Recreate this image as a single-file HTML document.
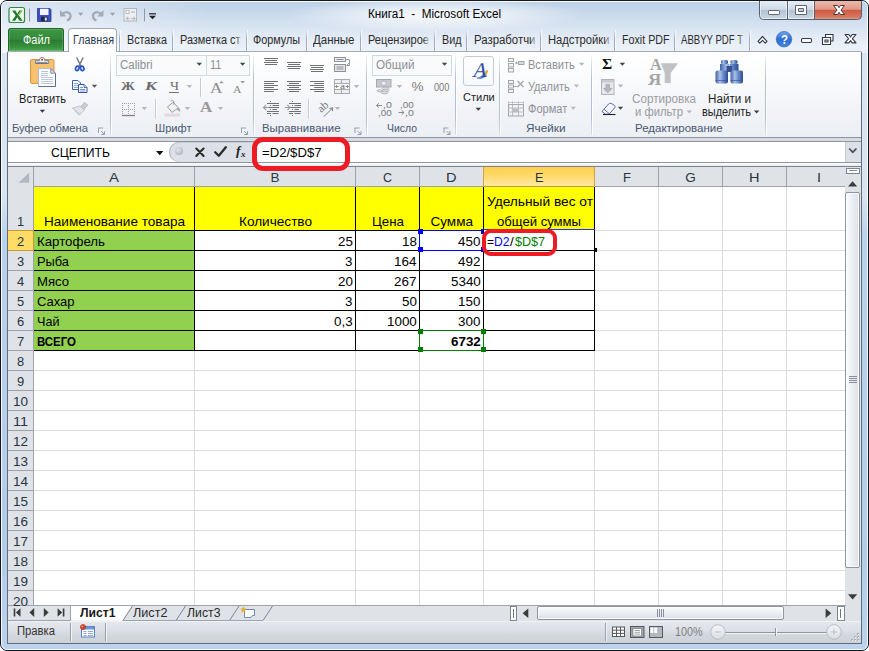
<!DOCTYPE html>
<html lang="ru"><head><meta charset="utf-8"><title>Книга1 - Microsoft Excel</title>
<style>
html,body{margin:0;padding:0;}
body{width:869px;height:651px;overflow:hidden;position:relative;background:#fff;font-family:"Liberation Sans",sans-serif;font-size:12px;color:#1e1e1e;}
#win{position:absolute;left:0;top:0;width:867px;height:649px;border:1px solid #14181f;border-radius:7px;background:linear-gradient(#dbe6f3 0px,#d7e4f2 195px,#b9d2ed 236px,#b2cceb 560px,#bbd3ee 649px);overflow:hidden;}
#win:before{content:"";position:absolute;left:0;top:0;right:0;bottom:0;border:1px solid rgba(255,255,255,.85);border-radius:6px;z-index:2;}
#win:after{content:"";position:absolute;left:1px;top:1px;right:1px;height:51px;background:linear-gradient(100deg,rgba(255,255,255,.4) 0%,rgba(255,255,255,.3) 12%,rgba(255,255,255,0) 24%,rgba(255,255,255,0) 100%),radial-gradient(ellipse 150px 17px at 433px 13px,rgba(255,255,255,.9),rgba(255,255,255,.5) 50%,rgba(255,255,255,0) 100%),linear-gradient(#bed1e8 0%,#c8d9ec 22%,#d9e4f2 50%,#e7eef7 78%,#eef3f9 100%);}
.a{position:absolute;}
.t{position:absolute;white-space:pre;line-height:1;transform-origin:0 0;display:block;}
svg{position:absolute;overflow:visible;}
#filebtn{background:linear-gradient(#3c9743 0%,#34893b 45%,#2b7b32 52%,#36903b 80%,#49ab4b 100%);border:1px solid #216628;border-bottom:none;border-radius:3px 3px 0 0;box-sizing:border-box;box-shadow:inset 0 0 0 1px rgba(255,255,255,.16);}
#acttab{background:#fff;border:1px solid #a0a8b4;border-bottom:none;border-radius:4px 4px 0 0;box-sizing:border-box;z-index:2;}
.tsep{width:1px;background:linear-gradient(rgba(150,165,185,0),rgba(150,165,185,.9) 40%,rgba(150,165,185,.9));box-shadow:1px 0 0 rgba(255,255,255,.7);}
#ribbon{background:linear-gradient(#ffffff 0%,#fbfcfd 25%,#f1f3f7 70%,#eceff4 100%);}
.gsep{width:1px;background:linear-gradient(rgba(175,188,205,.1),#b5c1d2 30%,#b5c1d2 80%,rgba(175,188,205,.3));box-shadow:1px 0 0 rgba(255,255,255,.9);}
#fbar{background:#d8dce2;}
#namebox,#finput{background:#fff;border:1px solid #a5b5cb;box-sizing:border-box;}
#grid{background:#fff;}
#pill{background:#dde1e7;border-radius:10px 0 0 10px;box-shadow:inset 1px 0 0 #aeb4bd, inset 0 1px 0 #c9cdd4;}
.sthumb{box-sizing:border-box;border:1px solid #8e959f;border-radius:2px;box-shadow:inset 0 0 0 1px rgba(255,255,255,.8);}
#status{background:linear-gradient(#e4e7ec 0%,#dcdfe5 40%,#d3d7de 60%,#cdd1d8 100%);border-top:1px solid #f1f2f5;box-sizing:border-box;}
.ssep{width:1px;background:#9aa0a9;box-shadow:1px 0 0 #f1f3f6;}
.zbtn{width:15px;height:15px;border-radius:50%;box-sizing:border-box;border:1px solid #b4b9c1;background:linear-gradient(#f4f5f7,#d5d9df);}
#client{box-sizing:border-box;border:1px solid #626d7c;border-top-color:#a3abb6;border-radius:2px 2px 0 0;pointer-events:none;}
.cbox{box-sizing:border-box;border:1px solid #d0d8e4;background:#f9fafc;}
.isep{width:1px;background:#c5ccd7;box-shadow:1px 0 0 #fff;}
.t{z-index:3;}

</style></head>
<body>
<div id="win"></div>
<div class="a" id="title">
<span class="t" style="left:368.0px;top:7.6px;font-size:12px;transform:scaleX(0.9746);color:#000;">Книга1  -  Microsoft Excel</span>
</div>
<div class="a" id="filebtn" style="left:8px;top:28px;width:56px;height:23px;"></div>
<span class="t" style="left:22.5px;top:33.8px;font-size:12px;transform:scaleX(0.9148);color:#fff;">Файл</span>
<div class="a" id="acttab" style="left:68px;top:28px;width:49px;height:24px;"></div>
<span class="t" style="left:72.5px;top:33.8px;font-size:12px;transform:scaleX(0.8974);color:#2b3a4e;">Главная</span>
<span class="t" style="left:126.5px;top:33.8px;font-size:12px;transform:scaleX(0.8967);color:#2b2b2b;">Вставка</span>
<span class="t" style="left:179.5px;top:33.8px;font-size:12px;transform:scaleX(0.9072);color:#2b2b2b;">Разметка ст</span>
<span class="t" style="left:253.0px;top:33.8px;font-size:12px;transform:scaleX(0.9001);color:#2b2b2b;">Формулы</span>
<span class="t" style="left:313.0px;top:33.8px;font-size:12px;transform:scaleX(0.9571);color:#2b2b2b;">Данные</span>
<span class="t" style="left:367.5px;top:33.8px;font-size:12px;transform:scaleX(0.9184);color:#2b2b2b;">Рецензирое</span>
<span class="t" style="left:441.5px;top:33.8px;font-size:12px;transform:scaleX(0.8978);color:#2b2b2b;">Вид</span>
<span class="t" style="left:473.5px;top:33.8px;font-size:12px;transform:scaleX(0.9500);color:#2b2b2b;">Разработчи</span>
<span class="t" style="left:547.5px;top:33.8px;font-size:12px;transform:scaleX(0.9340);color:#2b2b2b;">Надстройки</span>
<span class="t" style="left:621.5px;top:33.8px;font-size:12px;transform:scaleX(0.8905);color:#2b2b2b;">Foxit PDF</span>
<span class="t" style="left:681.0px;top:33.8px;font-size:12px;transform:scaleX(0.7990);color:#2b2b2b;">ABBYY PDF T</span>
<div class="a" style="left:234.5px;top:33px;width:6px;height:15px;z-index:4;background:linear-gradient(90deg,rgba(226,234,245,0),rgba(226,234,245,.8));"></div>
<div class="a" style="left:423px;top:33px;width:6px;height:15px;z-index:4;background:linear-gradient(90deg,rgba(226,234,245,0),rgba(226,234,245,.8));"></div>
<div class="a" style="left:529.5px;top:33px;width:6px;height:15px;z-index:4;background:linear-gradient(90deg,rgba(226,234,245,0),rgba(226,234,245,.8));"></div>
<div class="a" style="left:603.5px;top:33px;width:6px;height:15px;z-index:4;background:linear-gradient(90deg,rgba(226,234,245,0),rgba(226,234,245,.8));"></div>
<div class="a" style="left:737.5px;top:33px;width:6px;height:15px;z-index:4;background:linear-gradient(90deg,rgba(226,234,245,0),rgba(226,234,245,.8));"></div>
<div class="a tsep" style="left:119px;top:30px;height:21px;"></div>
<div class="a tsep" style="left:172px;top:30px;height:21px;"></div>
<div class="a tsep" style="left:246px;top:30px;height:21px;"></div>
<div class="a tsep" style="left:306px;top:30px;height:21px;"></div>
<div class="a tsep" style="left:360px;top:30px;height:21px;"></div>
<div class="a tsep" style="left:434px;top:30px;height:21px;"></div>
<div class="a tsep" style="left:466px;top:30px;height:21px;"></div>
<div class="a tsep" style="left:540px;top:30px;height:21px;"></div>
<div class="a tsep" style="left:614px;top:30px;height:21px;"></div>
<div class="a tsep" style="left:674px;top:30px;height:21px;"></div>
<div class="a tsep" style="left:749px;top:30px;height:21px;"></div>
<div class="a" id="ribbon" style="left:8px;top:52px;width:853px;height:85px;"></div>
<div class="a" style="left:8px;top:137px;width:853px;height:1px;background:#8e959f;"></div>
<div class="a gsep" style="left:109.5px;top:54px;height:81px;"></div>
<div class="a gsep" style="left:252.5px;top:54px;height:81px;"></div>
<div class="a gsep" style="left:365.5px;top:54px;height:81px;"></div>
<div class="a gsep" style="left:454.5px;top:54px;height:81px;"></div>
<div class="a gsep" style="left:499px;top:54px;height:81px;"></div>
<div class="a gsep" style="left:591px;top:54px;height:81px;"></div>
<div class="a gsep" style="left:765px;top:54px;height:81px;"></div>
<span class="t" style="left:11.5px;top:123.1px;font-size:11.5px;transform:scaleX(0.9724);color:#4a5870;">Буфер обмена</span>
<span class="t" style="left:154.5px;top:123.1px;font-size:11.5px;transform:scaleX(0.9645);color:#4a5870;">Шрифт</span>
<span class="t" style="left:262.0px;top:123.1px;font-size:11.5px;transform:scaleX(0.9915);color:#4a5870;">Выравнивание</span>
<span class="t" style="left:387.0px;top:123.1px;font-size:11.5px;transform:scaleX(0.9069);color:#4a5870;">Число</span>
<span class="t" style="left:526.0px;top:123.1px;font-size:11.5px;transform:scaleX(1.0239);color:#4a5870;">Ячейки</span>
<span class="t" style="left:635.0px;top:123.1px;font-size:11.5px;color:#4a5870;">Редактирование</span>
<div class="a" id="fbar" style="left:8px;top:138px;width:853px;height:29px;"></div>
<div class="a" style="left:8px;top:141px;width:853px;height:1px;background:#8f959d;"></div>
<div class="a" style="left:8px;top:142px;width:853px;height:20px;background:#fff;"></div>
<div class="a" style="left:8px;top:162px;width:853px;height:1px;background:#8f959d;"></div>
<div class="a" style="left:8px;top:163px;width:853px;height:3px;background:linear-gradient(#fff,#e6e9f4);"></div>
<div class="a" style="left:8px;top:166px;width:853px;height:1px;background:#7d838c;"></div>
<div class="a" id="pill" style="left:169px;top:142px;width:86px;height:20px;"></div>
<div class="a" style="left:174.5px;top:147px;width:8px;height:8px;border-radius:50%;background:radial-gradient(circle at 40% 35%,#e6e8ec,#b4b8bf 70%,#a9adb5);"></div>
<svg style="left:156px;top:151px" width="8" height="5"><path d="M0 0H7.4L3.7 4.2Z" fill="#111"/></svg>
<svg style="left:0;top:0;z-index:2" width="869" height="651"><path d="M196.300 148.600C198.500 150.800 201 153.300 203.600 155.900M203.600 148.600C201.300 150.800 198.800 153.300 196.300 155.900" stroke="#2a2a2a" stroke-width="2.100" fill="none" stroke-linecap="round"/><path d="M215.200 152.200L218.800 155.700L225.800 147.200" stroke="#2a2a2a" stroke-width="2.300" fill="none" stroke-linecap="round" stroke-linejoin="round"/></svg>
<span class="t" style="left:236px;top:144px;font-family:'Liberation Serif',serif;font-style:italic;font-weight:bold;font-size:13.5px;color:#222;">f</span>
<span class="t" style="left:241px;top:149.500px;font-family:'Liberation Serif',serif;font-style:italic;font-weight:bold;font-size:9px;color:#222;">x</span>
<span class="t" style="left:50.5px;top:145.6px;font-size:13.5px;transform:scaleX(0.9040);color:#000;">СЦЕПИТЬ</span>
<span class="t" style="left:262.0px;top:145.6px;font-size:13.5px;transform:scaleX(0.9727);color:#000;">=D2/$D$7</span>
<div class="a" style="left:845px;top:142px;width:16px;height:20px;background:#dde1e7;border-left:1px solid #c9cdd4;box-sizing:border-box;"></div>
<svg style="left:848px;top:147px" width="10" height="8"><path d="M1.2 1.5L4.8 5.3L8.4 1.5" stroke="#4a4a4a" stroke-width="1.700" fill="none"/></svg>
<div class="a" id="grid" style="left:8px;top:167px;width:838px;height:439px;"></div>
<div class="a" style="left:0;top:0;width:846px;height:606px;overflow:hidden;"><div class="a" style="left:8px;top:167px;width:838px;height:19px;background:#dfe3e8;border-bottom:1px solid #9da3ab;"></div>
<div class="a" style="left:8px;top:167px;width:25px;height:439px;background:#dfe3e8;border-right:1px solid #9da3ab;"></div>
<div class="a" style="left:483px;top:167px;width:112px;height:20px;box-sizing:border-box;background:linear-gradient(#ffcf48,#ffdb70 50%,#ffe9a2);border:1px solid #d6a045;border-top:none;border-bottom-color:#c4964c;z-index:1;"></div>
<div class="a" style="left:8px;top:230px;width:26px;height:21px;box-sizing:border-box;background:#ffdc66;border:1px solid #cb9434;border-left:none;z-index:1;"></div>
<svg style="left:18px;top:172px" width="12" height="11"><path d="M11.2 0.5V10.8H0.6Z" fill="#b3b8c0"/></svg>
<div class="a" style="left:194px;top:167px;width:1px;height:19px;background:#9da3ab;"></div>
<div class="a" style="left:194px;top:187px;width:1px;height:419px;background:#dbdcdf;"></div>
<div class="a" style="left:355px;top:167px;width:1px;height:19px;background:#9da3ab;"></div>
<div class="a" style="left:355px;top:187px;width:1px;height:419px;background:#dbdcdf;"></div>
<div class="a" style="left:419px;top:167px;width:1px;height:19px;background:#9da3ab;"></div>
<div class="a" style="left:419px;top:187px;width:1px;height:419px;background:#dbdcdf;"></div>
<div class="a" style="left:483px;top:167px;width:1px;height:19px;background:#9da3ab;"></div>
<div class="a" style="left:483px;top:187px;width:1px;height:419px;background:#dbdcdf;"></div>
<div class="a" style="left:594px;top:167px;width:1px;height:19px;background:#9da3ab;"></div>
<div class="a" style="left:594px;top:187px;width:1px;height:419px;background:#dbdcdf;"></div>
<div class="a" style="left:658px;top:167px;width:1px;height:19px;background:#9da3ab;"></div>
<div class="a" style="left:658px;top:187px;width:1px;height:419px;background:#dbdcdf;"></div>
<div class="a" style="left:722px;top:167px;width:1px;height:19px;background:#9da3ab;"></div>
<div class="a" style="left:722px;top:187px;width:1px;height:419px;background:#dbdcdf;"></div>
<div class="a" style="left:786px;top:167px;width:1px;height:19px;background:#9da3ab;"></div>
<div class="a" style="left:786px;top:187px;width:1px;height:419px;background:#dbdcdf;"></div>
<div class="a" style="left:850px;top:167px;width:1px;height:19px;background:#9da3ab;"></div>
<div class="a" style="left:850px;top:187px;width:1px;height:419px;background:#dbdcdf;"></div>
<div class="a" style="left:8px;top:230px;width:25px;height:1px;background:#9da3ab;"></div>
<div class="a" style="left:34px;top:230px;width:812px;height:1px;background:#dbdcdf;"></div>
<div class="a" style="left:8px;top:250px;width:25px;height:1px;background:#9da3ab;"></div>
<div class="a" style="left:34px;top:250px;width:812px;height:1px;background:#dbdcdf;"></div>
<div class="a" style="left:8px;top:270px;width:25px;height:1px;background:#9da3ab;"></div>
<div class="a" style="left:34px;top:270px;width:812px;height:1px;background:#dbdcdf;"></div>
<div class="a" style="left:8px;top:290px;width:25px;height:1px;background:#9da3ab;"></div>
<div class="a" style="left:34px;top:290px;width:812px;height:1px;background:#dbdcdf;"></div>
<div class="a" style="left:8px;top:310px;width:25px;height:1px;background:#9da3ab;"></div>
<div class="a" style="left:34px;top:310px;width:812px;height:1px;background:#dbdcdf;"></div>
<div class="a" style="left:8px;top:330px;width:25px;height:1px;background:#9da3ab;"></div>
<div class="a" style="left:34px;top:330px;width:812px;height:1px;background:#dbdcdf;"></div>
<div class="a" style="left:8px;top:350px;width:25px;height:1px;background:#9da3ab;"></div>
<div class="a" style="left:34px;top:350px;width:812px;height:1px;background:#dbdcdf;"></div>
<div class="a" style="left:8px;top:370px;width:25px;height:1px;background:#9da3ab;"></div>
<div class="a" style="left:34px;top:370px;width:812px;height:1px;background:#dbdcdf;"></div>
<div class="a" style="left:8px;top:390px;width:25px;height:1px;background:#9da3ab;"></div>
<div class="a" style="left:34px;top:390px;width:812px;height:1px;background:#dbdcdf;"></div>
<div class="a" style="left:8px;top:410px;width:25px;height:1px;background:#9da3ab;"></div>
<div class="a" style="left:34px;top:410px;width:812px;height:1px;background:#dbdcdf;"></div>
<div class="a" style="left:8px;top:430px;width:25px;height:1px;background:#9da3ab;"></div>
<div class="a" style="left:34px;top:430px;width:812px;height:1px;background:#dbdcdf;"></div>
<div class="a" style="left:8px;top:450px;width:25px;height:1px;background:#9da3ab;"></div>
<div class="a" style="left:34px;top:450px;width:812px;height:1px;background:#dbdcdf;"></div>
<div class="a" style="left:8px;top:470px;width:25px;height:1px;background:#9da3ab;"></div>
<div class="a" style="left:34px;top:470px;width:812px;height:1px;background:#dbdcdf;"></div>
<div class="a" style="left:8px;top:490px;width:25px;height:1px;background:#9da3ab;"></div>
<div class="a" style="left:34px;top:490px;width:812px;height:1px;background:#dbdcdf;"></div>
<div class="a" style="left:8px;top:510px;width:25px;height:1px;background:#9da3ab;"></div>
<div class="a" style="left:34px;top:510px;width:812px;height:1px;background:#dbdcdf;"></div>
<div class="a" style="left:8px;top:530px;width:25px;height:1px;background:#9da3ab;"></div>
<div class="a" style="left:34px;top:530px;width:812px;height:1px;background:#dbdcdf;"></div>
<div class="a" style="left:8px;top:550px;width:25px;height:1px;background:#9da3ab;"></div>
<div class="a" style="left:34px;top:550px;width:812px;height:1px;background:#dbdcdf;"></div>
<div class="a" style="left:8px;top:570px;width:25px;height:1px;background:#9da3ab;"></div>
<div class="a" style="left:34px;top:570px;width:812px;height:1px;background:#dbdcdf;"></div>
<div class="a" style="left:8px;top:590px;width:25px;height:1px;background:#9da3ab;"></div>
<div class="a" style="left:34px;top:590px;width:812px;height:1px;background:#dbdcdf;"></div>
<div class="a" style="left:8px;top:610px;width:25px;height:1px;background:#9da3ab;"></div>
<div class="a" style="left:34px;top:610px;width:812px;height:1px;background:#dbdcdf;"></div>
<div class="a" style="left:34px;top:187px;width:560px;height:43px;background:#ffff00;"></div>
<div class="a" style="left:34px;top:231px;width:160px;height:119px;background:#92d050;"></div>
<div class="a" style="left:195px;top:231px;width:399px;height:119px;background:#fff;"></div>
<div class="a" style="left:194px;top:187px;width:1px;height:164px;background:#000;"></div>
<div class="a" style="left:355px;top:187px;width:1px;height:164px;background:#000;"></div>
<div class="a" style="left:419px;top:187px;width:1px;height:164px;background:#000;"></div>
<div class="a" style="left:483px;top:187px;width:1px;height:164px;background:#000;"></div>
<div class="a" style="left:594px;top:187px;width:1px;height:164px;background:#000;"></div>
<div class="a" style="left:34px;top:230px;width:561px;height:1px;background:#000;"></div>
<div class="a" style="left:34px;top:250px;width:561px;height:1px;background:#000;"></div>
<div class="a" style="left:34px;top:270px;width:561px;height:1px;background:#000;"></div>
<div class="a" style="left:34px;top:290px;width:561px;height:1px;background:#000;"></div>
<div class="a" style="left:34px;top:310px;width:561px;height:1px;background:#000;"></div>
<div class="a" style="left:34px;top:330px;width:561px;height:1px;background:#000;"></div>
<div class="a" style="left:34px;top:350px;width:561px;height:1px;background:#000;"></div></div>
<span class="t" style="left:109.0px;top:170.9px;font-size:13.5px;transform:scaleX(1.1092);color:#27343f;">A</span>
<span class="t" style="left:270.5px;top:170.9px;font-size:13.5px;color:#27343f;">B</span>
<span class="t" style="left:383.0px;top:170.9px;font-size:13.5px;transform:scaleX(0.9231);color:#27343f;">C</span>
<span class="t" style="left:446.2px;top:170.9px;font-size:13.5px;transform:scaleX(1.0769);color:#27343f;">D</span>
<span class="t" style="left:534.8px;top:170.9px;font-size:13.5px;transform:scaleX(0.9428);color:#27343f;">E</span>
<span class="t" style="left:622.5px;top:170.9px;font-size:13.5px;transform:scaleX(0.9697);color:#27343f;">F</span>
<span class="t" style="left:685.2px;top:170.9px;font-size:13.5px;color:#27343f;">G</span>
<span class="t" style="left:749.2px;top:170.9px;font-size:13.5px;transform:scaleX(1.0769);color:#27343f;">H</span>
<span class="t" style="left:816.5px;top:170.9px;font-size:13.5px;transform:scaleX(1.0622);color:#27343f;">I</span>
<span class="t" style="left:16.9px;top:214.6px;font-size:13.5px;transform:scaleX(0.9580);color:#27343f;">1</span>
<span class="t" style="left:16.9px;top:234.6px;font-size:13.5px;transform:scaleX(0.9580);color:#27343f;">2</span>
<span class="t" style="left:16.9px;top:254.6px;font-size:13.5px;transform:scaleX(0.9580);color:#27343f;">3</span>
<span class="t" style="left:16.9px;top:274.6px;font-size:13.5px;transform:scaleX(0.9580);color:#27343f;">4</span>
<span class="t" style="left:16.9px;top:294.6px;font-size:13.5px;transform:scaleX(0.9580);color:#27343f;">5</span>
<span class="t" style="left:16.9px;top:314.6px;font-size:13.5px;transform:scaleX(0.9580);color:#27343f;">6</span>
<span class="t" style="left:16.9px;top:334.6px;font-size:13.5px;transform:scaleX(0.9580);color:#27343f;">7</span>
<span class="t" style="left:16.9px;top:354.6px;font-size:13.5px;transform:scaleX(0.9580);color:#27343f;">8</span>
<span class="t" style="left:16.9px;top:374.6px;font-size:13.5px;transform:scaleX(0.9580);color:#27343f;">9</span>
<span class="t" style="left:13.0px;top:394.6px;font-size:13.5px;color:#27343f;">10</span>
<span class="t" style="left:13.0px;top:414.6px;font-size:13.5px;transform:scaleX(1.0702);color:#27343f;">11</span>
<span class="t" style="left:13.0px;top:434.6px;font-size:13.5px;color:#27343f;">12</span>
<span class="t" style="left:13.0px;top:454.6px;font-size:13.5px;color:#27343f;">13</span>
<span class="t" style="left:13.0px;top:474.6px;font-size:13.5px;color:#27343f;">14</span>
<span class="t" style="left:13.0px;top:494.6px;font-size:13.5px;color:#27343f;">15</span>
<span class="t" style="left:13.0px;top:514.6px;font-size:13.5px;color:#27343f;">16</span>
<span class="t" style="left:13.0px;top:534.6px;font-size:13.5px;color:#27343f;">17</span>
<span class="t" style="left:13.0px;top:554.6px;font-size:13.5px;color:#27343f;">18</span>
<span class="t" style="left:13.0px;top:574.6px;font-size:13.5px;color:#27343f;">19</span>
<div class="a" style="left:8px;top:591px;width:25px;height:15px;overflow:hidden;"><span class="t" style="left:5.0px;top:3.6px;font-size:13.5px;color:#27343f;">20</span></div>
<span class="t" style="left:43.5px;top:214.6px;font-size:13.5px;transform:scaleX(1.0041);color:#000;">Наименование товара</span>
<span class="t" style="left:238.5px;top:214.6px;font-size:13.5px;transform:scaleX(1.0069);color:#000;">Количество</span>
<span class="t" style="left:372.0px;top:214.6px;font-size:13.5px;transform:scaleX(0.9856);color:#000;">Цена</span>
<span class="t" style="left:430.5px;top:214.6px;font-size:13.5px;color:#000;">Сумма</span>
<span class="t" style="left:486.5px;top:194.6px;font-size:13.5px;transform:scaleX(1.0168);color:#000;">Удельный вес от</span>
<span class="t" style="left:497.0px;top:214.6px;font-size:13.5px;transform:scaleX(0.9697);color:#000;">общей суммы</span>
<span class="t" style="left:36.5px;top:234.6px;font-size:13.5px;transform:scaleX(0.9826);color:#000;">Картофель</span>
<span class="t" style="left:36.5px;top:254.6px;font-size:13.5px;transform:scaleX(0.9512);color:#000;">Рыба</span>
<span class="t" style="left:36.5px;top:274.6px;font-size:13.5px;transform:scaleX(0.9706);color:#000;">Мясо</span>
<span class="t" style="left:36.5px;top:294.6px;font-size:13.5px;transform:scaleX(0.9608);color:#000;">Сахар</span>
<span class="t" style="left:36.5px;top:314.6px;font-size:13.5px;transform:scaleX(0.9357);color:#000;">Чай</span>
<span class="t" style="left:36.5px;top:334.6px;font-size:13.5px;transform:scaleX(0.8484);color:#000;font-weight:bold;">ВСЕГО</span>
<span class="t" style="left:337.6px;top:234.6px;font-size:13.5px;transform:scaleX(0.9913);color:#000;">25</span>
<span class="t" style="left:345.1px;top:254.6px;font-size:13.5px;transform:scaleX(0.9913);color:#000;">3</span>
<span class="t" style="left:337.6px;top:274.6px;font-size:13.5px;transform:scaleX(0.9913);color:#000;">20</span>
<span class="t" style="left:345.1px;top:294.6px;font-size:13.5px;transform:scaleX(0.9913);color:#000;">3</span>
<span class="t" style="left:333.9px;top:314.6px;font-size:13.5px;transform:scaleX(0.9903);color:#000;">0,3</span>
<span class="t" style="left:401.6px;top:234.6px;font-size:13.5px;transform:scaleX(0.9913);color:#000;">18</span>
<span class="t" style="left:394.1px;top:254.6px;font-size:13.5px;transform:scaleX(0.9920);color:#000;">164</span>
<span class="t" style="left:394.1px;top:274.6px;font-size:13.5px;transform:scaleX(0.9920);color:#000;">267</span>
<span class="t" style="left:401.6px;top:294.6px;font-size:13.5px;transform:scaleX(0.9913);color:#000;">50</span>
<span class="t" style="left:386.7px;top:314.6px;font-size:13.5px;transform:scaleX(0.9918);color:#000;">1000</span>
<span class="t" style="left:458.1px;top:234.6px;font-size:13.5px;transform:scaleX(0.9920);color:#000;">450</span>
<span class="t" style="left:458.1px;top:254.6px;font-size:13.5px;transform:scaleX(0.9920);color:#000;">492</span>
<span class="t" style="left:450.7px;top:274.6px;font-size:13.5px;transform:scaleX(0.9918);color:#000;">5340</span>
<span class="t" style="left:458.1px;top:294.6px;font-size:13.5px;transform:scaleX(0.9920);color:#000;">150</span>
<span class="t" style="left:458.1px;top:314.6px;font-size:13.5px;transform:scaleX(0.9920);color:#000;">300</span>
<span class="t" style="left:451.0px;top:334.6px;font-size:13.5px;transform:scaleX(0.9918);color:#000;font-weight:bold;">6732</span>
<div class="a" style="left:845px;top:167px;width:16px;height:438px;background:#dfe3e8;"></div>
<div class="a" style="left:846px;top:168px;width:14px;height:6px;box-sizing:border-box;border:1px solid #7f858e;background:#fff;"></div>
<div class="a" style="left:849px;top:170px;width:8px;height:1px;background:#8a9099;"></div>
<svg style="left:848px;top:181px" width="10" height="6"><path d="M0 5.4L4.6 0.3L9.2 5.4Z" fill="#3c3c3c"/></svg>
<div class="a sthumb" style="left:845px;top:192px;width:15px;height:376px;background:linear-gradient(90deg,#fbfcfd,#eef1f5 40%,#dde1e7);"></div>
<div class="a" style="left:849px;top:376px;width:8px;height:1px;background:#8a9099;"></div>
<div class="a" style="left:849px;top:378px;width:8px;height:1px;background:#8a9099;"></div>
<div class="a" style="left:849px;top:380px;width:8px;height:1px;background:#8a9099;"></div>
<div class="a" style="left:849px;top:382px;width:8px;height:1px;background:#8a9099;"></div>
<svg style="left:848px;top:594px" width="10" height="6"><path d="M0 0.3H9.2L4.6 5.4Z" fill="#3c3c3c"/></svg>
<div class="a" style="left:8px;top:605px;width:853px;height:16px;background:#dfe3e8;"></div>
<div class="a" style="left:8px;top:605px;width:838px;height:1px;background:#9da3ab;"></div>
<div class="a" style="left:8px;top:620px;width:63px;height:1px;background:#9da3ab;"></div>
<svg style="left:0;top:0" width="869" height="651"><path d="M13.7 608.5v8h1.6v-8zM15.9 612.5l4.6-4.2v8.4z" fill="#3b3b3b"/><path d="M29.4 612.5l4.8-4.4v8.8z" fill="#3b3b3b"/><path d="M48.6 612.5l-4.8-4.4v8.8z" fill="#3b3b3b"/><path d="M64.4 608.5v8h-1.6v-8zM62.2 612.5l-4.6-4.2v8.4z" fill="#3b3b3b"/><path d="M70.5 606H131.5L122.5 620.5H70.5Z" fill="#fff"/><path d="M70.5 606V620.5" stroke="#9da3ab" fill="none"/><path d="M132.5 606L123 620.5M185.5 606L176 620.5M239 606L229.5 620.5M272.5 606L263 620.5" stroke="#7f858e" stroke-width="1" fill="none"/><path d="M123 620.5H263" stroke="#9da3ab" fill="none"/></svg>
<span class="t" style="left:80.0px;top:606.8px;font-size:12.5px;transform:scaleX(0.9730);color:#1a1a1a;font-weight:bold;">Лист1</span>
<span class="t" style="left:133.0px;top:606.8px;font-size:12.5px;transform:scaleX(1.0110);color:#2a2a2a;">Лист2</span>
<span class="t" style="left:187.0px;top:606.8px;font-size:12.5px;transform:scaleX(0.9817);color:#2a2a2a;">Лист3</span>
<div class="a" style="left:510px;top:606px;width:7px;height:15px;box-sizing:border-box;border:1px solid #7f858e;background:#fff;"></div>
<div class="a" style="left:513px;top:609px;width:1px;height:9px;background:#6f757e;"></div>
<svg style="left:522px;top:608px" width="7" height="11"><path d="M6.3 0.5V10.1L0.6 5.3Z" fill="#3c3c3c"/></svg>
<div class="a sthumb" style="left:537px;top:606px;width:247px;height:14px;background:linear-gradient(#fbfcfd,#eef1f5 40%,#dde1e7);"></div>
<div class="a" style="left:657px;top:609px;width:1px;height:8px;background:#8a9099;"></div>
<div class="a" style="left:659px;top:609px;width:1px;height:8px;background:#8a9099;"></div>
<div class="a" style="left:661px;top:609px;width:1px;height:8px;background:#8a9099;"></div>
<div class="a" style="left:663px;top:609px;width:1px;height:8px;background:#8a9099;"></div>
<svg style="left:825px;top:608px" width="7" height="11"><path d="M0.6 0.5V10.1L6.3 5.3Z" fill="#3c3c3c"/></svg>
<div class="a" style="left:837px;top:606px;width:8px;height:15px;box-sizing:border-box;border:1px solid #7f858e;background:#fff;"></div>
<div class="a" style="left:840px;top:609px;width:1px;height:9px;background:#6f757e;"></div>
<div class="a" id="status" style="left:8px;top:621px;width:853px;height:22px;"></div>
<span class="t" style="left:16.5px;top:625.2px;font-size:12px;transform:scaleX(0.9372);color:#333;">Правка</span>
<div class="a ssep" style="left:70px;top:623px;height:18px;"></div>
<div class="a ssep" style="left:105px;top:623px;height:18px;"></div>
<div class="a ssep" style="left:605px;top:623px;height:18px;"></div>
<span class="t" style="left:674.5px;top:625.6px;font-size:12px;transform:scaleX(0.8957);color:#7a7d82;">100%</span>
<div class="a" style="left:725px;top:631.5px;width:102px;height:1px;background:#8e949c;box-shadow:0 1px 0 #f4f5f7;"></div>
<div class="a" style="left:775px;top:628px;width:1px;height:8px;background:#8e949c;box-shadow:1px 0 0 #f4f5f7;"></div>
<svg style="left:0;top:0;z-index:2" width="869" height="651"><defs><linearGradient id="zg" x1="0" y1="0" x2="0" y2="1"><stop offset="0" stop-color="#f3f4f6"/><stop offset="1" stop-color="#d9dce2"/></linearGradient></defs><circle cx="718" cy="632" r="7.300" fill="url(#zg)" stroke="#b3b8c0" stroke-width=".9"/><rect x="714.2" y="631" width="7.600" height="2" fill="#c3c7cd" stroke="#f7f8f9" stroke-width=".6"/><circle cx="834" cy="632" r="7.300" fill="url(#zg)" stroke="#b3b8c0" stroke-width=".9"/><path d="M830.2 631h2.800v-2.800h2v2.800h2.800v2h-2.800v2.800h-2v-2.800h-2.800z" fill="#c3c7cd" stroke="#f7f8f9" stroke-width=".6"/></svg>
<div class="a" id="client" style="left:7px;top:51px;width:855px;height:593px;"></div>
<div class="a" style="left:419px;top:230px;width:65px;height:21px;box-sizing:border-box;border:1px solid #0000ff;"></div>
<div class="a" style="left:418px;top:229px;width:5px;height:5px;background:#0000ff;"></div>
<div class="a" style="left:418px;top:247px;width:5px;height:5px;background:#0000ff;"></div>
<div class="a" style="left:481px;top:229px;width:5px;height:5px;background:#0000ff;"></div>
<div class="a" style="left:481px;top:247px;width:5px;height:5px;background:#0000ff;"></div>
<div class="a" style="left:419px;top:330px;width:65px;height:21px;box-sizing:border-box;border:1px solid #008000;"></div>
<div class="a" style="left:418px;top:329px;width:5px;height:5px;background:#007a00;"></div>
<div class="a" style="left:418px;top:347px;width:5px;height:5px;background:#007a00;"></div>
<div class="a" style="left:481px;top:329px;width:5px;height:5px;background:#007a00;"></div>
<div class="a" style="left:481px;top:347px;width:5px;height:5px;background:#007a00;"></div>
<div class="a" style="left:484px;top:229px;width:111px;height:1px;background:#2a2aff;z-index:4;"></div>
<div class="a" style="left:483px;top:230px;width:112px;height:20.5px;border:1px solid #000;box-sizing:border-box;background:#fff;border-top:none;"></div>
<div class="a" style="left:593.5px;top:248px;width:3.5px;height:4px;background:#000;"></div>
<span class="t" style="left:486.5px;top:234.6px;font-size:13.5px;transform:scaleX(0.8871);color:#000;">=</span>
<span class="t" style="left:493.5px;top:234.6px;font-size:13.5px;transform:scaleX(0.8977);color:#0000ff;">D2</span>
<span class="t" style="left:510.0px;top:234.6px;font-size:13.5px;color:#000;">/</span>
<span class="t" style="left:515.0px;top:234.6px;font-size:13.5px;transform:scaleX(0.9293);color:#008000;">$D$7</span>
<div class="a" style="left:252px;top:137.300px;width:98.200px;height:34.200px;box-sizing:border-box;border:5px solid #ed1c24;border-radius:11px;z-index:5;"></div>
<div class="a" style="left:482px;top:228.700px;width:75.300px;height:27.500px;box-sizing:border-box;border:4.600px solid #ed1c24;border-radius:9px;z-index:5;"></div>
<div class="a cbox" style="left:116px;top:55px;width:91px;height:21px;"></div>
<div class="a cbox" style="left:206px;top:55px;width:44px;height:21px;"></div>
<span class="t" style="left:119.5px;top:59.4px;font-size:12px;transform:scaleX(0.9554);color:#8b8f96;">Calibri</span>
<span class="t" style="left:209.5px;top:59.4px;font-size:12px;transform:scaleX(0.9223);color:#8b8f96;">11</span>
<span class="t" style="left:121.0px;top:79.2px;font-size:13.5px;transform:scaleX(1.0330);font-family:'Liberation Serif',serif;font-weight:bold;color:#6b6b6b;">Ж</span>
<span class="t" style="left:145.0px;top:79.2px;font-size:13.5px;transform:scaleX(1.3106);font-family:'Liberation Serif',serif;font-weight:bold;font-style:italic;color:#6b6b6b;">К</span>
<span class="t" style="left:169.5px;top:79.2px;font-size:13.5px;transform:scaleX(1.0249);font-family:'Liberation Serif',serif;color:#6b6b6b;">Ч</span>
<div class="a" style="left:169px;top:92px;width:10px;height:1px;background:#777;"></div>
<div class="a isep" style="left:200px;top:78px;height:19px;"></div>
<span class="t" style="left:209.5px;top:79.7px;font-size:15.5px;transform:scaleX(1.1158);font-family:'Liberation Serif',serif;color:#8c8c8c;">A</span>
<span class="t" style="left:232.5px;top:83.5px;font-size:11px;transform:scaleX(1.0688);font-family:'Liberation Serif',serif;color:#8c8c8c;">A</span>
<div class="a isep" style="left:155px;top:99px;height:20px;"></div>
<span class="t" style="left:199.5px;top:98.7px;font-size:15.5px;transform:scaleX(1.0979);font-family:'Liberation Serif',serif;font-weight:bold;color:#9a9a9a;">A</span>
<span class="t" style="left:339.5px;top:81.7px;font-size:9px;transform:scaleX(1.2500);font-family:'Liberation Serif',serif;color:#6e6e6e;">a</span>
<div class="a isep" style="left:308px;top:99px;height:20px;"></div>
<div class="a cbox" style="left:372px;top:55px;width:80px;height:21px;"></div>
<span class="t" style="left:375.5px;top:59.4px;font-size:12px;transform:scaleX(0.9747);color:#8b8f96;">Общий</span>
<span class="t" style="left:411.5px;top:80.1px;font-size:13.5px;color:#7a7a7a;">%</span>
<span class="t" style="left:433.5px;top:81.8px;font-size:11.5px;transform:scaleX(0.7974);color:#7a7a7a;">000</span>
<span class="t" style="left:383.0px;top:101.4px;font-size:9px;transform:scaleX(1.1709);color:#7a7a7a;">,0</span>
<span class="t" style="left:378.0px;top:108.6px;font-size:9px;transform:scaleX(1.1026);color:#7a7a7a;">,00</span>
<span class="t" style="left:400.0px;top:101.4px;font-size:9px;transform:scaleX(1.1026);color:#7a7a7a;">,00</span>
<span class="t" style="left:405.0px;top:108.6px;font-size:9px;transform:scaleX(1.1709);color:#7a7a7a;">,0</span>
<div class="a" style="left:463px;top:55.500px;width:31px;height:30px;box-sizing:border-box;border:1px solid #c3cbd7;border-radius:3px;background:linear-gradient(#fff,#f6f8fb);"></div>
<span class="t" style="left:470.500px;top:59.800px;font-size:21px;font-family:'Liberation Serif',serif;color:#2b4aa0;transform:skewX(-12deg);transform-origin:0 100%;">A</span>
<span class="t" style="left:462.5px;top:91.8px;font-size:11.5px;transform:scaleX(0.9595);color:#1e1e1e;">Стили</span>
<span class="t" style="left:527.5px;top:59.1px;font-size:12px;transform:scaleX(0.9199);color:#8f9196;">Вставить</span>
<span class="t" style="left:527.5px;top:81.1px;font-size:12px;transform:scaleX(0.9099);color:#8f9196;">Удалить</span>
<span class="t" style="left:527.5px;top:103.0px;font-size:12px;transform:scaleX(0.9193);color:#8f9196;">Формат</span>
<span class="t" style="left:602.3px;top:56.5px;font-size:14.5px;transform:scaleX(1.0755);font-family:'Liberation Serif',serif;font-weight:bold;color:#111;">Σ</span>
<span class="t" style="left:649.5px;top:57.1px;font-size:16px;transform:scaleX(1.0205);font-family:'Liberation Serif',serif;font-weight:bold;color:#a6a6a6;">A</span>
<span class="t" style="left:648.0px;top:71.6px;font-size:16px;transform:scaleX(1.1503);font-family:'Liberation Serif',serif;font-weight:bold;color:#a6a6a6;">Я</span>
<span class="t" style="left:631.5px;top:93.1px;font-size:12px;transform:scaleX(0.9718);color:#9a9ca1;">Сортировка</span>
<span class="t" style="left:635.0px;top:105.6px;font-size:12px;transform:scaleX(0.9392);color:#9a9ca1;">и фильтр</span>
<span class="t" style="left:708.0px;top:93.1px;font-size:12px;transform:scaleX(0.9711);color:#1e1e1e;">Найти и</span>
<span class="t" style="left:701.5px;top:105.6px;font-size:12px;transform:scaleX(0.9119);color:#1e1e1e;">выделить</span>
<svg style="left:0;top:0;z-index:2" width="869" height="651"><g>
<rect x="30.500" y="59.500" width="23.500" height="24" rx="1.500" fill="#f4bb62" stroke="#d9964a"/>
<rect x="31.500" y="60.500" width="21.500" height="22" fill="#f6c473" opacity=".8"/>
<path d="M35.500 63.500v-2.800h3.900c0-1.900 1.100-3.400 2.700-3.400s2.700 1.500 2.700 3.400h3.900v2.800z" fill="#eef0f4" stroke="#6f7886" stroke-width=".9"/>
<path d="M36.500 62.800h11" stroke="#4e5663" stroke-width=".9"/>
<circle cx="42.100" cy="59.800" r=".95" fill="#9a3a22"/>
<path d="M38.500 68.500h12.300l4.700 4.700v13.300h-17z" fill="#fdfdfe" stroke="#a9bbd6"/>
<path d="M55.500 73.200v13.300h-17" fill="none" stroke="#5f6f8c"/>
<path d="M50.800 68.500v4.700h4.700z" fill="#dde5f1" stroke="#6f809e" stroke-width=".9"/>
<path d="M41 71.500h7M41 73.500h7M41 75.500h7M41 77.500h12M41 79.500h12M41 81.500h12M41 83.500h12" stroke="#b3c1d7" stroke-width=".9"/>
</g>
<path d="M39.7 109.7h5.4l-2.7 3z" fill="#3c3c3c"/>
<g fill="none">
<path d="M76.900 58l4 8.200M82.900 58l-4 8.200" stroke="#777d86" stroke-width="1.500" stroke-linecap="round"/>
<ellipse cx="77.300" cy="68.400" rx="1.700" ry="2.300" stroke="#2450c0" stroke-width="1.600" fill="#dfe8fa" transform="rotate(20 77.300 68.400)"/>
<ellipse cx="82.200" cy="68.400" rx="1.700" ry="2.300" stroke="#2450c0" stroke-width="1.600" fill="#dfe8fa" transform="rotate(-20 82.200 68.400)"/>
</g>
<g>
<path d="M72.500 80.500h5.500l2.500 2.500v6.500h-8z" fill="#fff" stroke="#3a62b3"/>
<path d="M74 83.5h4M74 85.5h5M74 87.500h5" stroke="#7f9bd0" stroke-width=".9"/>
<path d="M78.500 84.500h5.500l3 3v5h-8.500z" fill="#fff" stroke="#2f55a6"/>
<path d="M84 84.500v3h3" fill="#cfdcf3" stroke="#2f55a6" stroke-width=".8"/>
<path d="M80 87.500h3M80 89.500h5.500M80 91h5.500" stroke="#6f8fce" stroke-width=".9"/>
</g>
<path d="M91.8 84.8h5.4l-2.7 3z" fill="#555"/>
<g>
<path d="M84.500 102.300l3.300 2.700-4.300 5-3.300-2.700z" fill="#c9ccd1" stroke="#aeb2b8" stroke-width=".7"/>
<path d="M72.300 108.300l7.600-2.300 4.600 3.800-5.200 5.400c-2.400-2.900-4.600-5-7-6.900z" fill="#e3e5e8" stroke="#b3b7bd" stroke-width=".8"/>
<path d="M74.500 109.500c2 1.500 3.600 3.100 5 4.700" stroke="#c5c8cd" fill="none"/>
</g>
<path d="M196.6 62.8h5.4l-2.7 3z" fill="#444"/>
<path d="M239.9 62.8h5.4l-2.7 3z" fill="#444"/>
<path d="M186.7 85h5.4l-2.7 3z" fill="#b3b6bb"/>
<path d="M219.2 83.300h4.600l-2.300-2.600z" fill="#9a9a9a"/>
<path d="M240.300 81h4.600l-2.300 2.600z" fill="#9a9a9a"/>
<g stroke="#9a9ea5" stroke-width="1" stroke-dasharray="1 1" fill="none">
<path d="M122.500 103v12M128.500 103v12M134.500 103v12M122 103.500h13M122 109.500h13"/></g>
<path d="M122 115.500h13" stroke="#7e7e7e" stroke-width="1.200"/>
<path d="M141.6 107h5.4l-2.7 3z" fill="#b3b6bb"/>
<g>
<path d="M167.500 106.800l5.800-4.600 5 5.600-6.300 4.600z" fill="#f3f3f4" stroke="#8f9298" stroke-width=".9"/>
<path d="M171 101.500c.5-1.500 2.600-1.500 2.800.3l.2 3" fill="none" stroke="#8f9298" stroke-width=".9"/>
<path d="M178.300 107.500c1.500.5 2.200 2 1.900 4.400-.9-.9-2-1.500-3.400-2z" fill="#a7aab0"/>
<rect x="164.500" y="113.500" width="15.500" height="3.200" fill="#e3dadf"/>
</g>
<path d="M184.7 107h5.4l-2.7 3z" fill="#b3b6bb"/>
<path d="M217.8 107h5.4l-2.7 3z" fill="#b3b6bb"/>
<path d="M264 58.5h14M264.98 60.5h12.04M264 62.5h14M264.98 64.5h12.04" stroke="#707070" stroke-width="1" fill="none"/>
<path d="M287 62.5h14M287.98 64.5h12.04M287 66.5h14M287.98 68.5h12.04" stroke="#707070" stroke-width="1" fill="none"/>
<path d="M310 65.5h14M310.98 67.5h12.04M310 69.5h14M310.98 71.5h12.04" stroke="#707070" stroke-width="1" fill="none"/>
<path d="M264 81.5h14M264 83.5h9.8M264 85.5h14M264 87.5h9.8M264 89.5h14M264 91.5h9.8" stroke="#707070" stroke-width="1" fill="none"/>
<path d="M287 81.5h14M288.96 83.5h10.08M287 85.5h14M288.96 87.5h10.08M287 89.5h14M288.96 91.5h10.08" stroke="#707070" stroke-width="1" fill="none"/>
<path d="M310 81.5h14M314.2 83.5h9.8M310 85.5h14M314.2 87.5h9.8M310 89.5h14M314.2 91.5h9.8" stroke="#707070" stroke-width="1" fill="none"/>
<g>
<rect x="334.500" y="57.500" width="11" height="4" fill="#eceef1" stroke="#8d9096"/>
<path d="M336.500 59.500h7" stroke="#8d9096"/>
<path d="M345.500 59.500h4v6l-2.500 0" fill="none" stroke="#8d9096" stroke-width=".9"/>
<path d="M349 63l-2.300 2.500 2.500.3" fill="none" stroke="#8d9096" stroke-width=".9"/>
<rect x="334.500" y="64.500" width="11" height="7" fill="#e3e5e9" stroke="#8d9096"/>
<path d="M336.500 67h7M336.500 69h7" stroke="#8d9096"/>
</g>
<g>
<rect x="334.500" y="79.500" width="15" height="14" fill="#eceef1" stroke="#a7aab0"/>
<path d="M334.500 83.500h15M334.500 89.500h15M341.500 79.500v4M341.500 89.500v4" stroke="#a7aab0"/>
<rect x="335" y="84" width="14" height="5" fill="#f8f8f9"/>
<path d="M335.500 86.500h3M345.500 86.500h3" stroke="#7d7d7d" stroke-width=".9"/>
<path d="M337 85l-1.500 1.500 1.500 1.500M347 85l1.500 1.500-1.500 1.500" stroke="#7d7d7d" stroke-width=".8" fill="none"/>
</g>
<path d="M353.8 85h5.4l-2.7 3z" fill="#b3b6bb"/>
<path d="M270.5 101v15" stroke="#707070" stroke-dasharray="1 1"/><path d="M267 103.5h12M267 107.5h12M267 111.5h12" stroke="#707070" stroke-width="1" fill="none"/><path d="M272.5 105.5h6.500M272.5 109.500h4.500" stroke="#707070"/><path d="M267 113.500h3M272.5 113.500h6" stroke="#707070"/><path d="M263.5 107.500h5M266.1 105l-2.600 2.500 2.600 2.500" stroke="#9a9da3" fill="none" stroke-width="1.100"/>
<path d="M292.5 101v15" stroke="#707070" stroke-dasharray="1 1"/><path d="M289 103.5h12M289 107.5h12M289 111.5h12" stroke="#707070" stroke-width="1" fill="none"/><path d="M294.5 105.5h6.500M294.5 109.500h4.500" stroke="#707070"/><path d="M289 113.500h3M294.5 113.500h6" stroke="#707070"/><path d="M285 107.500h5M287.4 105l2.600 2.500-2.600 2.500" stroke="#9a9da3" fill="none" stroke-width="1.100"/>
<text x="0" y="3.300" transform="translate(323 107) rotate(-42)" text-anchor="middle" font-family="Liberation Serif, serif" font-size="11.500" fill="#777">ab</text>
<path d="M324 116.500l8.500-8.500M332.800 107.800l-3.300.6M332.800 107.800l-.5 3.300" stroke="#7a7a7a" fill="none" stroke-width="1"/>
<path d="M334.7 107h5.4l-2.7 3z" fill="#b3b6bb"/>
<path d="M441.8 62.8h5.4l-2.7 3z" fill="#444"/>
<g>
<rect x="376.500" y="79.500" width="14.500" height="7.500" fill="#c7c9cd" stroke="#a5a8ad"/>
<ellipse cx="383.700" cy="83.300" rx="2.600" ry="2.200" fill="#e9eaec" stroke="#a5a8ad" stroke-width=".7"/>
<ellipse cx="385.500" cy="88.500" rx="3.500" ry="1.300" fill="#e3e4e7" stroke="#a5a8ad" stroke-width=".8"/>
<ellipse cx="385.500" cy="90.500" rx="3.500" ry="1.300" fill="#e3e4e7" stroke="#a5a8ad" stroke-width=".8"/>
<ellipse cx="384.500" cy="92.500" rx="3.500" ry="1.300" fill="#e3e4e7" stroke="#a5a8ad" stroke-width=".8"/>
<ellipse cx="379.500" cy="90.800" rx="2.500" ry="1.100" fill="#e3e4e7" stroke="#a5a8ad" stroke-width=".8"/>
</g>
<path d="M396.8 84.9h5.4l-2.7 3z" fill="#b3b6bb"/>
<path d="M376.500 105.500h5.500M378.800 103.300l-2.300 2.200 2.300 2.200" stroke="#8a8a8a" fill="none"/>
<path d="M398.500 112.500h5.500M401.700 110.300l2.300 2.200-2.300 2.200" stroke="#8a8a8a" fill="none"/>
<path d="M477 78c2.500-.2 5.300-1.800 7.200-4.600l2.200 1.500c-2 3-5.400 4.300-9.400 3.100z" fill="#5b8fe0" stroke="#2b4aa0" stroke-width=".5"/>
<path d="M484.200 73.400l2.400-3.600 1.600 1.100-1.800 4z" fill="#eda13a"/>
<path d="M475.6 107.8h5.4l-2.7 3z" fill="#3c3c3c"/>
<path d="M579 62.7h5.4l-2.7 3z" fill="#b3b6bb"/>
<path d="M573.8 84.5h5.4l-2.7 3z" fill="#b3b6bb"/>
<path d="M570.6 106.7h5.4l-2.7 3z" fill="#b3b6bb"/>
<g fill="#f2f3f5" stroke="#9b9ea4" stroke-width=".9">
<rect x="508.500" y="58.500" width="5" height="3"/><rect x="508.500" y="63.500" width="5" height="3.500"/><rect x="508.500" y="68.500" width="5" height="3.500"/>
<rect x="518.500" y="61.500" width="5.500" height="3" fill="#d9dbdf"/>
<path d="M515 63h3M516.300 61.700v2.600" fill="none"/>
</g>
<g fill="#f2f3f5" stroke="#9b9ea4" stroke-width=".9">
<rect x="508.500" y="80.500" width="5" height="3"/><rect x="508.500" y="85" width="5" height="3"/><rect x="508.500" y="89.500" width="5" height="3"/>
<path d="M514 86.500h4.500" fill="none"/>
<path d="M517.500 81l6 6M523.500 81l-6 6" fill="none" stroke="#a3a6ac" stroke-width="1.300"/>
</g>
<g>
<rect x="508.500" y="104.500" width="15" height="11.500" fill="#f0f1f3" stroke="#9b9ea4" stroke-width=".9"/>
<path d="M508.500 108h15M508.500 112h15M512.500 104.500v11.500M518.500 104.500v11.500" stroke="#b4b7bc" stroke-width=".9"/>
<rect x="513" y="108.500" width="5" height="3.500" fill="#b9bcc2"/>
<path d="M508.500 101.500v3M512.500 101.500v3M518.500 101.500v3M523.500 101.500v3M508.500 102.500h15" stroke="#9b9ea4" stroke-width=".9" stroke-dasharray="1 1"/>
</g>
<path d="M619.7 62.7h5.4l-2.7 3z" fill="#444"/>
<g>
<rect x="601.500" y="79.500" width="12.500" height="15" fill="#e6e7ea" stroke="#b0b3b8"/>
<rect x="602" y="80" width="11.500" height="2.500" fill="#c9cbd0"/>
<path d="M606 84.500h3.500v4h2.400l-4.150 4.300-4.150-4.300h2.400z" fill="#b4b7bc" stroke="#9a9da3" stroke-width=".6"/>
</g>
<path d="M617.8 84.5h5.4l-2.7 3z" fill="#b3b6bb"/>
<g>
<path d="M602 111.500l6.500-7.500c.8-.9 2-.9 3.300-.3l2.400 1.500c1 .8 1.100 1.800.4 2.700l-5.500 6.300h-3.600z" fill="#f4f6fb" stroke="#3d5da8" stroke-width=".9"/>
<path d="M604 109.200l5 4.300" stroke="#3d5da8" stroke-width=".8"/>
<path d="M603 114.500h12.500" stroke="#222" stroke-width="1.100"/>
</g>
<path d="M617.8 106.7h5.4l-2.7 3z" fill="#444"/>
<path d="M661 63.300h17l-7.300 9.800v10h-6v-10z" fill="#bfc1c5"/>
<path d="M686.6 110.5h5.4l-2.7 3z" fill="#b3b6bb"/>
<defs><linearGradient id="bn" x1="0" x2="1"><stop offset="0" stop-color="#3f62a8"/><stop offset=".35" stop-color="#a9bfe6"/><stop offset=".6" stop-color="#6f8fcd"/><stop offset="1" stop-color="#2d4b8e"/></linearGradient></defs>
<g>
<rect x="721" y="60" width="7" height="4" rx="1.500" fill="url(#bn)"/><rect x="730.500" y="60" width="7" height="4" rx="1.500" fill="url(#bn)"/>
<path d="M720 64h9v7h-9zM729.500 64h9v7h-9z" fill="url(#bn)"/>
<rect x="726.500" y="66" width="5.500" height="6" fill="#33508f"/>
<rect x="715.500" y="70.500" width="12.500" height="13" rx="2" fill="url(#bn)"/>
<rect x="730.500" y="70.500" width="12.500" height="13" rx="2" fill="url(#bn)"/>
<path d="M715.500 80.500h12.500M730.500 80.500h12.500" stroke="#2d4b8e" stroke-width=".8" opacity=".7"/>
</g>
<path d="M753.9 110.5h5.4l-2.7 3z" fill="#3c3c3c"/>
<path d="M98.5 128v5M98 128h5" stroke="#9aa2ae" fill="none"/><path d="M104.5 134.500v-3.300M104.5 134.500h-3.300M104.1 134l-3-3" stroke="#8a929e" fill="none" stroke-width=".9"/>
<path d="M241.5 128v5M241 128h5" stroke="#9aa2ae" fill="none"/><path d="M247.5 134.500v-3.300M247.5 134.500h-3.300M247.1 134l-3-3" stroke="#8a929e" fill="none" stroke-width=".9"/>
<path d="M355 128v5M354.5 128h5" stroke="#9aa2ae" fill="none"/><path d="M361 134.500v-3.300M361 134.500h-3.300M360.6 134l-3-3" stroke="#8a929e" fill="none" stroke-width=".9"/>
<path d="M444 128v5M443.5 128h5" stroke="#9aa2ae" fill="none"/><path d="M450 134.500v-3.300M450 134.500h-3.300M449.6 134l-3-3" stroke="#8a929e" fill="none" stroke-width=".9"/></svg>
<svg style="left:0;top:0;z-index:2" width="869" height="651"><g>
<rect x="9" y="7.500" width="15.500" height="15" rx="2" fill="#f4faf4" stroke="#2f8a3c" stroke-width="1.200"/>
<path d="M12 10.500h3.300l2 3.300 2-3.300h3.200l-3.600 5 3.800 5.200h-3.300l-2.100-3.500-2.100 3.500h-3.200l3.700-5.200z" fill="#1f7a2e"/>
<path d="M17.500 15l3.600-4.500h1.400l-3.600 5z" fill="#8ed04b"/>
</g>
<path d="M29.500 8.500v13M144.500 8.500v13" stroke="#8f98a5" fill="none"/>
<g>
<path d="M37.500 8.500h12.500l1 1v12h-13.500z" fill="#3d51b9" stroke="#2b3a94" stroke-width=".8"/>
<rect x="40" y="8.800" width="8.500" height="6.200" fill="#f4f6fb"/>
<rect x="41" y="16.800" width="6.500" height="4.500" fill="#22284a"/>
<rect x="44.800" y="17.600" width="2" height="3" fill="#e4e7f0"/>
</g>
<g fill="none" stroke="#a4abb6" stroke-width="2.300">
<path d="M63 13.500c3-2.500 7.500-1.500 7.500 2.500 0 2.500-1.500 3.800-3.500 4.500"/>
<path d="M100.500 13.500c-3-2.500-7.500-1.500-7.500 2.500 0 2.500 1.500 3.800 3.500 4.500"/>
</g>
<path d="M60 10v6.500h6.500z" fill="#a4abb6"/><path d="M103.500 10v6.500h-6.500z" fill="#a4abb6"/>
<path d="M78 12.8h5.4l-2.7 3z" fill="#9aa1ad"/>
<path d="M109.9 12.8h5.4l-2.7 3z" fill="#9aa1ad"/>
<g>
<rect x="124" y="8.500" width="12.500" height="12.500" fill="#eceef1" stroke="#b2b6bd"/>
<rect x="126" y="10.500" width="3" height="3" fill="#fff" stroke="#a9adb4" stroke-width=".8"/>
<path d="M131 12h4" stroke="#a9adb4"/>
<path d="M126.500 18.500h3M131 18.500h4M133.500 16.500l1.500 2-1.500 2M128 16.500l-1.500 2 1.500 2" stroke="#a9adb4" fill="none" stroke-width=".9"/>
</g>
<path d="M149 13.800h7" stroke="#222" stroke-width="1.200"/><path d="M149 15.800h7l-3.500 3.400z" fill="#222"/>
<defs>
<linearGradient id="cb" x1="0" y1="0" x2="0" y2="1"><stop offset="0" stop-color="#e6edf5"/><stop offset=".45" stop-color="#cfdae6"/><stop offset=".5" stop-color="#b3c2d3"/><stop offset="1" stop-color="#cbd8e5"/></linearGradient>
<linearGradient id="cr" x1="0" y1="0" x2="0" y2="1"><stop offset="0" stop-color="#ecb9ad"/><stop offset=".45" stop-color="#e29886"/><stop offset=".5" stop-color="#cf5a42"/><stop offset=".85" stop-color="#d7755f"/><stop offset="1" stop-color="#e3a595"/></linearGradient>
<linearGradient id="hq" x1="0" y1="0" x2="0" y2="1"><stop offset="0" stop-color="#6fa6ee"/><stop offset=".5" stop-color="#2f6fd2"/><stop offset="1" stop-color="#3f86e2"/></linearGradient>
</defs>
<path d="M759.500 1v14.500a4 4 0 0 0 4 4h24.500v-18.500z" fill="url(#cb)"/>
<rect x="788" y="1" width="26.500" height="18.500" fill="url(#cb)"/>
<path d="M814.500 1h47v14.500a4 4 0 0 1-4 4h-43z" fill="url(#cr)"/>
<path d="M759.500 1v14.500a4 4 0 0 0 4 4h94a4 4 0 0 0 4-4v-14.500M787.500 1v18.500M814.500 1v18.500" fill="none" stroke="#56606e"/>
<path d="M760.500 1.500v14a3 3 0 0 0 3 3h23v-17M788.500 1.500v17h25v-17" fill="none" stroke="rgba(255,255,255,.55)"/>
<rect x="768.500" y="10.500" width="11" height="4" rx=".8" fill="#fff" stroke="#4d5764" stroke-width=".9"/>
<path d="M795.500 5.500h11v9h-11zM798.500 8.500h5v3h-5z" fill="#fff" fill-rule="evenodd" stroke="#4d5764" stroke-width=".9"/>
<path d="M833.500 5.500h4.100l1.400 2.200 1.400-2.200h4.100l-3.500 4.500 3.500 4.500h-4.100l-1.400-2.200-1.400 2.200h-4.100l3.500-4.500z" fill="#fff" stroke="#4a3a3a" stroke-width="1" stroke-linejoin="round"/>

<path d="M758 41.300l4.500-4.800 4.500 4.800-1.800 1.900-2.700-2.900-2.700 2.900z" fill="#fff" stroke="#333a45" stroke-width="1.100" stroke-linejoin="round"/>
<circle cx="784" cy="39.200" r="7.800" fill="url(#hq)" stroke="#2b5fb5" stroke-width=".6"/>
<rect x="801.500" y="38.500" width="10" height="4" rx="1.200" fill="#fff" stroke="#333a45" stroke-width="1.100"/>
<path d="M825.500 34.500h7.500v6.500h-2.500v-3.500h-5z" fill="#fff" stroke="#333a45" stroke-width="1.100"/>
<path d="M822.500 37.500h8v7h-8zM825 40h3v2h-3z" fill="#fff" fill-rule="evenodd" stroke="#333a45" stroke-width="1.100"/>
<path d="M845 34.500h3.800l1.700 2.300 1.700-2.300h3.800l-3.600 4.200 3.600 4.200h-3.800l-1.700-2.300-1.700 2.300h-3.800l3.600-4.200z" fill="#fff" stroke="#333a45" stroke-width="1.100" stroke-linejoin="round"/>
</svg>
<span class="t" style="left:780.5px;top:32.8px;font-size:13px;transform:scaleX(0.8802);color:#fff;font-weight:bold;">?</span>
<span class="t" style="left:19.3px;top:92.5px;font-size:12px;transform:scaleX(0.9238);color:#1e1e1e;">Вставить</span>
<svg style="left:0;top:0;z-index:2" width="869" height="651"><g>
<path d="M244.500 609.500h10v6h-2l-1.500 2h-6.500z" fill="#fdfdfe" stroke="#5f7fb8" stroke-width=".9"/>
<path d="M243.500 607l.8 1.800 1.900.2-1.400 1.300.4 1.900-1.700-1-1.700 1 .4-1.900-1.400-1.300 1.900-.2z" fill="#f4b52c" stroke="#d18a14" stroke-width=".4"/>
</g>
<g>
<rect x="81.500" y="626.500" width="13" height="10.500" fill="#fdfdfe" stroke="#4f78c2" stroke-width=".9"/>
<rect x="82" y="627" width="12" height="2.500" fill="#6f96d8"/>
<path d="M83.500 631.500h3M88 631.500h5M83.500 633.500h3M88 633.500h5M83.500 635.500h3M88 635.500h5" stroke="#7f9fd6" stroke-width=".9"/>
<circle cx="83" cy="627" r="2.600" fill="#d5402b" stroke="#a52a1a" stroke-width=".5"/>
<circle cx="82.300" cy="626.300" r=".9" fill="#f3a194"/>
</g>
<g>
<rect x="612.500" y="627" width="12" height="9.500" fill="#fff" stroke="#55595f" stroke-width="1"/>
<path d="M612.500 630.200h12M612.500 633.400h12M616.500 627v9.500M620.500 627v9.500" stroke="#55595f" stroke-width="1"/>
<rect x="630.500" y="626.500" width="13.500" height="11" fill="#a4a7ac" stroke="#55595f" stroke-width="1"/>
<rect x="633" y="628.500" width="8.500" height="7.500" fill="#fff" stroke="#6a6e75" stroke-width=".6"/>
<path d="M634.500 630.500h5.500M634.500 632.300h5.500M634.500 634.100h5.500" stroke="#8a8f97" stroke-width=".8"/>
<rect x="649.500" y="626.500" width="13" height="11" fill="#b4b7bc" stroke="#55595f" stroke-width="1"/>
<rect x="650.500" y="627.500" width="2.800" height="5.500" fill="#fff"/><rect x="654.300" y="627.500" width="2.800" height="5.500" fill="#fff"/>
</g>
<rect x="857" y="639" width="2" height="2" fill="#a9aeb7"/><rect x="858" y="640" width="1" height="1" fill="#f4f5f7"/><rect x="854" y="639" width="2" height="2" fill="#a9aeb7"/><rect x="855" y="640" width="1" height="1" fill="#f4f5f7"/><rect x="851" y="639" width="2" height="2" fill="#a9aeb7"/><rect x="852" y="640" width="1" height="1" fill="#f4f5f7"/><rect x="857" y="636" width="2" height="2" fill="#a9aeb7"/><rect x="858" y="637" width="1" height="1" fill="#f4f5f7"/><rect x="854" y="636" width="2" height="2" fill="#a9aeb7"/><rect x="855" y="637" width="1" height="1" fill="#f4f5f7"/><rect x="857" y="633" width="2" height="2" fill="#a9aeb7"/><rect x="858" y="634" width="1" height="1" fill="#f4f5f7"/></svg>
</body></html>
